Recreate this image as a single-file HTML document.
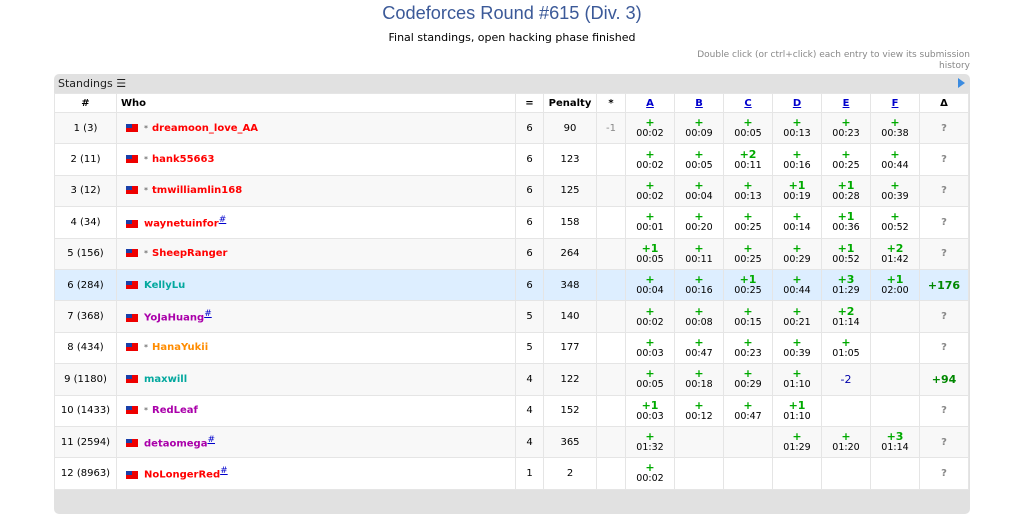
<!DOCTYPE html>
<html><head><meta charset="utf-8"><style>
body{margin:0;background:#fff;font-family:"DejaVu Sans",Verdana,sans-serif;width:1024px;height:489px;overflow:hidden;position:relative}
.title{position:absolute;top:3px;left:0;width:1024px;text-align:center;font-size:18.2px;color:#3b5998;font-family:"Liberation Sans",Arial,sans-serif}
.sub{position:absolute;top:31px;left:0;width:1024px;text-align:center;font-size:11px;color:#000}
.hint{position:absolute;top:50px;right:54px;width:292px;text-align:right;font-size:9px;color:#888;line-height:11px}
.box{position:absolute;left:54px;top:74px;width:916px;height:440px;background:#e1e1e1;border-radius:5px}
.cap{position:absolute;left:4px;top:3px;font-size:11px;color:#222}
.arr{position:absolute;right:5px;top:4px;width:0;height:0;border-left:7px solid #3b8be0;border-top:5px solid transparent;border-bottom:5px solid transparent}
table{position:absolute;left:0;top:19px;border-collapse:collapse;table-layout:fixed;width:914px;background:#fff;font-size:10px}
td,th{border:1px solid #e5e5e5;text-align:center;padding:0;overflow:hidden;white-space:nowrap}
th{height:18px;font-size:10px;font-weight:bold}
td{height:30.4px}
tr.o td{background:#f8f8f8}
tr.hl td{background:#ddeeff}
th a{color:#00c;text-decoration:underline}
td.who{text-align:left;padding-left:9px;font-weight:bold;font-size:10px}
th.who{text-align:left;padding-left:4px}
.fl{display:inline-block;width:12px;height:8px;background:#e00;position:relative;vertical-align:-1px;margin-right:6px}
.fl:before{content:"";position:absolute;left:0;top:0;width:6px;height:4px;background:#1a3fa8}
.st{color:#555;font-weight:normal;font-size:8px;margin-right:4px}
.r{color:#f00}.c{color:#03a89e}.v{color:#a0a}.or{color:#ff8c00}
sup{color:#00c;font-weight:normal;font-size:9px;text-decoration:underline}
.p{color:#0a0;font-weight:bold;font-size:11px;line-height:11px;display:block}
.t{font-size:9.5px;line-height:11px;display:block}
.q{color:#888;font-weight:bold}
.d{color:#080;font-weight:bold;font-size:11px}
.m{color:#00a;font-size:11px}
</style></head><body>
<div class="title">Codeforces Round #615 (Div. 3)</div>
<div class="sub">Final standings, open hacking phase finished</div>
<div class="hint">Double click (or ctrl+click) each entry to view its submission history</div>
<div class="box"><div class="cap">Standings &#9776;</div><div class="arr"></div>
<table>
<colgroup><col style="width:62px"><col style="width:399px"><col style="width:28px"><col style="width:53px"><col style="width:29px"><col style="width:49px"><col style="width:49px"><col style="width:49px"><col style="width:49px"><col style="width:49px"><col style="width:49px"><col style="width:49px"></colgroup>
<tr><th>#</th><th class="who">Who</th><th>=</th><th>Penalty</th><th>*</th><th><a>A</a></th><th><a>B</a></th><th><a>C</a></th><th><a>D</a></th><th><a>E</a></th><th><a>F</a></th><th>&Delta;</th></tr>
<tr class="o"><td>1 (3)</td><td class="who"><span class="fl"></span><span class="st">*</span><span class="r">dreamoon_love_AA</span></td><td>6</td><td>90</td><td style="color:#888">-1</td><td><span class="p">+</span><span class="t">00:02</span></td><td><span class="p">+</span><span class="t">00:09</span></td><td><span class="p">+</span><span class="t">00:05</span></td><td><span class="p">+</span><span class="t">00:13</span></td><td><span class="p">+</span><span class="t">00:23</span></td><td><span class="p">+</span><span class="t">00:38</span></td><td class="q">?</td></tr>
<tr><td>2 (11)</td><td class="who"><span class="fl"></span><span class="st">*</span><span class="r">hank55663</span></td><td>6</td><td>123</td><td></td><td><span class="p">+</span><span class="t">00:02</span></td><td><span class="p">+</span><span class="t">00:05</span></td><td><span class="p">+2</span><span class="t">00:11</span></td><td><span class="p">+</span><span class="t">00:16</span></td><td><span class="p">+</span><span class="t">00:25</span></td><td><span class="p">+</span><span class="t">00:44</span></td><td class="q">?</td></tr>
<tr class="o"><td>3 (12)</td><td class="who"><span class="fl"></span><span class="st">*</span><span class="r">tmwilliamlin168</span></td><td>6</td><td>125</td><td></td><td><span class="p">+</span><span class="t">00:02</span></td><td><span class="p">+</span><span class="t">00:04</span></td><td><span class="p">+</span><span class="t">00:13</span></td><td><span class="p">+1</span><span class="t">00:19</span></td><td><span class="p">+1</span><span class="t">00:28</span></td><td><span class="p">+</span><span class="t">00:39</span></td><td class="q">?</td></tr>
<tr><td>4 (34)</td><td class="who"><span class="fl"></span><span class="r">waynetuinfor</span><sup>#</sup></td><td>6</td><td>158</td><td></td><td><span class="p">+</span><span class="t">00:01</span></td><td><span class="p">+</span><span class="t">00:20</span></td><td><span class="p">+</span><span class="t">00:25</span></td><td><span class="p">+</span><span class="t">00:14</span></td><td><span class="p">+1</span><span class="t">00:36</span></td><td><span class="p">+</span><span class="t">00:52</span></td><td class="q">?</td></tr>
<tr class="o"><td>5 (156)</td><td class="who"><span class="fl"></span><span class="st">*</span><span class="r">SheepRanger</span></td><td>6</td><td>264</td><td></td><td><span class="p">+1</span><span class="t">00:05</span></td><td><span class="p">+</span><span class="t">00:11</span></td><td><span class="p">+</span><span class="t">00:25</span></td><td><span class="p">+</span><span class="t">00:29</span></td><td><span class="p">+1</span><span class="t">00:52</span></td><td><span class="p">+2</span><span class="t">01:42</span></td><td class="q">?</td></tr>
<tr class="hl"><td>6 (284)</td><td class="who"><span class="fl"></span><span class="c">KellyLu</span></td><td>6</td><td>348</td><td></td><td><span class="p">+</span><span class="t">00:04</span></td><td><span class="p">+</span><span class="t">00:16</span></td><td><span class="p">+1</span><span class="t">00:25</span></td><td><span class="p">+</span><span class="t">00:44</span></td><td><span class="p">+3</span><span class="t">01:29</span></td><td><span class="p">+1</span><span class="t">02:00</span></td><td class="d">+176</td></tr>
<tr class="o"><td>7 (368)</td><td class="who"><span class="fl"></span><span class="v">YoJaHuang</span><sup>#</sup></td><td>5</td><td>140</td><td></td><td><span class="p">+</span><span class="t">00:02</span></td><td><span class="p">+</span><span class="t">00:08</span></td><td><span class="p">+</span><span class="t">00:15</span></td><td><span class="p">+</span><span class="t">00:21</span></td><td><span class="p">+2</span><span class="t">01:14</span></td><td></td><td class="q">?</td></tr>
<tr><td>8 (434)</td><td class="who"><span class="fl"></span><span class="st">*</span><span class="or">HanaYukii</span></td><td>5</td><td>177</td><td></td><td><span class="p">+</span><span class="t">00:03</span></td><td><span class="p">+</span><span class="t">00:47</span></td><td><span class="p">+</span><span class="t">00:23</span></td><td><span class="p">+</span><span class="t">00:39</span></td><td><span class="p">+</span><span class="t">01:05</span></td><td></td><td class="q">?</td></tr>
<tr class="o"><td>9 (1180)</td><td class="who"><span class="fl"></span><span class="c">maxwill</span></td><td>4</td><td>122</td><td></td><td><span class="p">+</span><span class="t">00:05</span></td><td><span class="p">+</span><span class="t">00:18</span></td><td><span class="p">+</span><span class="t">00:29</span></td><td><span class="p">+</span><span class="t">01:10</span></td><td class="m">-2</td><td></td><td class="d">+94</td></tr>
<tr><td>10 (1433)</td><td class="who"><span class="fl"></span><span class="st">*</span><span class="v">RedLeaf</span></td><td>4</td><td>152</td><td></td><td><span class="p">+1</span><span class="t">00:03</span></td><td><span class="p">+</span><span class="t">00:12</span></td><td><span class="p">+</span><span class="t">00:47</span></td><td><span class="p">+1</span><span class="t">01:10</span></td><td></td><td></td><td class="q">?</td></tr>
<tr class="o"><td>11 (2594)</td><td class="who"><span class="fl"></span><span class="v">detaomega</span><sup>#</sup></td><td>4</td><td>365</td><td></td><td><span class="p">+</span><span class="t">01:32</span></td><td></td><td></td><td><span class="p">+</span><span class="t">01:29</span></td><td><span class="p">+</span><span class="t">01:20</span></td><td><span class="p">+3</span><span class="t">01:14</span></td><td class="q">?</td></tr>
<tr><td>12 (8963)</td><td class="who"><span class="fl"></span><span class="r">NoLongerRed</span><sup>#</sup></td><td>1</td><td>2</td><td></td><td><span class="p">+</span><span class="t">00:02</span></td><td></td><td></td><td></td><td></td><td></td><td class="q">?</td></tr>
</table></div>
</body></html>
